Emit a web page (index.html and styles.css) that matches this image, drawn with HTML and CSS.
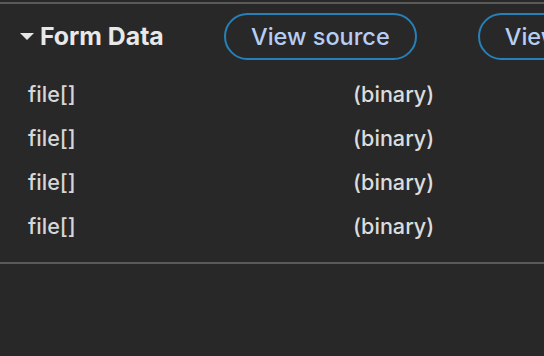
FILE: index.html
```html
<!DOCTYPE html>
<html>
<head>
<meta charset="utf-8">
<link rel="stylesheet" href="styles.css">
</head>
<body>
<div class="panel">
  <div class="header">
    <div class="title"><span class="caret"></span><span class="title-text">Form Data</span></div>
    <button class="btn">View source</button>
    <button class="btn">View URL-encoded</button>
  </div>
  <div class="rows">
    <div class="row"><span class="key">file[]</span><span class="val">(binary)</span></div>
    <div class="row"><span class="key">file[]</span><span class="val">(binary)</span></div>
    <div class="row"><span class="key">file[]</span><span class="val">(binary)</span></div>
    <div class="row"><span class="key">file[]</span><span class="val">(binary)</span></div>
  </div>
</div>
</body>
</html>
```
FILE: styles.css
```css
html, body {
  margin: 0;
  padding: 0;
  background: #282828;
  width: 544px;
  height: 356px;
  overflow: hidden;
}
body {
  font-family: Inter, "Noto Sans", sans-serif;
}
.panel {
  margin-top: 2px;
  border-top: 2px solid #5a5a5a;
  border-bottom: 2px solid #5a5a5a;
  padding-bottom: 14px;
}
.header {
  display: flex;
  align-items: center;
  height: 64px;
  padding-left: 20px;
  white-space: nowrap;
  overflow: hidden;
}
.title {
  display: flex;
  align-items: center;
  width: 204px;
  flex-shrink: 0;
}
.caret {
  width: 0;
  height: 0;
  border-left: 7.5px solid transparent;
  border-right: 7.5px solid transparent;
  border-top: 7px solid #e6e6e6;
  margin-right: 6px;
  margin-top: 1px;
}
.title-text {
  color: #e8e8e8;
  font-weight: 700;
  font-size: 24.8px;
}
.btn {
  flex-shrink: 0;
  height: 47px;
  border: 2px solid #2780b8;
  border-radius: 24px;
  background: transparent;
  color: #b7cdf4;
  font-family: Inter, "Noto Sans", sans-serif;
  font-size: 23.5px;
  font-weight: 500;
  padding: 0 25px;
  margin-right: 61px;
}
.rows {
  padding-left: 28px;
  padding-top: 4px;
}
.row {
  display: flex;
  height: 44px;
  align-items: center;
  font-size: 21.6px;
  font-weight: 500;
  color: #d6d6d6;
}
.key {
  width: 325px;
}
.val {
  color: #dcdcdc;
}
```
